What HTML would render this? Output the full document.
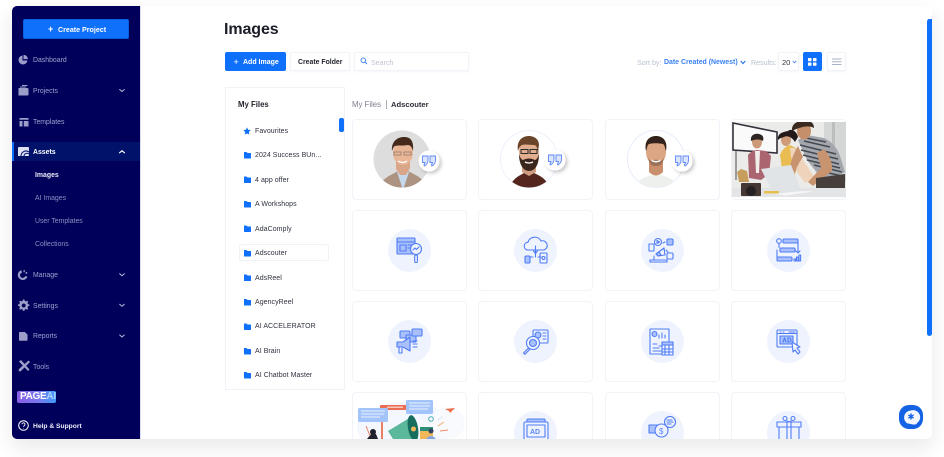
<!DOCTYPE html>
<html lang="en"><head><meta charset="utf-8"><title>Images</title>
<style>
*{box-sizing:border-box;margin:0;padding:0}
html,body{width:944px;height:457px;background:#fff;overflow:hidden;font-family:"Liberation Sans",sans-serif}
#win{position:absolute;left:12px;top:6px;width:920px;height:433px;background:#fff;box-shadow:0 8px 20px rgba(30,30,50,.1);border-radius:0 0 6px 6px;}
#clip{position:absolute;left:0;top:0;width:944px;height:439px;overflow:hidden}
.abs,.t,.card,.circ,svg.a{position:absolute}
.t{white-space:nowrap;line-height:10px;font-size:7.4px;margin-top:1px}
#side{position:absolute;left:12px;top:6px;width:128px;height:433px;background:#00005a;border-radius:5px 0 0 5px}
#sb{position:absolute;left:140px;top:6px;width:1px;height:433px;background:#dcdcf3}
.n{color:#a0a0cf;font-size:6.9px;margin-top:1.500px}
.s{color:#8d8dc2;font-size:6.9px;margin-top:1.500px}
.f{color:#2f3240;font-size:7px;left:255px;letter-spacing:.05px}
.card{width:115px;height:81px;background:#fff;border:1px solid #f1f3f9;border-radius:4px}
.circ{width:43px;height:43px;border-radius:50%;background:#eff3fd}
.ic{fill:none;stroke:#4f7cf6;stroke-width:1.100;stroke-linejoin:round;stroke-linecap:round}
.ic .m{fill:#a9c0fb}
.btn{position:absolute;border-radius:2px;background:#fff;border:1px solid #f1f3f9;box-shadow:0 1px 2px rgba(40,50,90,.05)}
</style></head><body>
<div id="win"></div>
<div id="clip">
<div id="side"></div><div id="sb"></div>

<div class="abs" style="left:23px;top:19px;width:106px;height:20px;background:#0f70fb;border-radius:2px;border:1px solid #0a5fe0"></div>
<div class="t" style="left:48px;top:24px;color:#fff;font-weight:700;font-size:9px;margin-top:0">+</div>
<div class="t" style="left:58px;top:24px;color:#fff;font-weight:700;font-size:7.100px">Create Project</div>

<svg class="a" style="left:12px;top:50px" width="128" height="330" viewBox="0 0 128 330" fill="#9d9dca">
<path d="M10.500 5.500a4.500 4.500 0 1 0 5 5h-5z"/><path d="M11.500 4.800a4.300 4.300 0 0 1 4.300 4.300h-4.300z"/>
<path d="M6.500 38h9a1 1 0 0 1 1 1v5.500a1 1 0 0 1-1 1h-9z"/><path d="M8 36.500h6v1H8zM10 35h5.500v1H10z"/>
<path d="M7.500 68h9v1.800h-9zM7.500 71h3v5.500h-3zM11.800 71h4.700v5.500h-4.700z"/>
<path d="M9.300 220.200a5 5 0 1 0 6.200 6.500l-2.400-.6a2.600 2.600 0 1 1-3-3.400z"/><path d="M11.500 220a5 5 0 0 1 1.800.6l-1 1.800-.8-.3zM14.500 221.600a5 5 0 0 1 1.100 1.700l-1.900.6-.5-.8z"/>
<path d="M11 249.500h1.400l.4 1.400 1.100.5 1.300-.7 1 1-.7 1.300.5 1.100 1.400.4v1.400l-1.400.4-.5 1.100.7 1.300-1 1-1.300-.7-1.100.5-.4 1.400H11l-.4-1.400-1.100-.5-1.300.7-1-1 .7-1.300-.5-1.100-1.400-.4v-1.400l1.400-.4.5-1.100-.7-1.300 1-1 1.300.7 1.100-.5zM11.700 253.500a2 2 0 1 0 .01 0z" fill-rule="evenodd"/>
<path d="M7.800 282h5l2.700 2.500v5.500a.8.8 0 0 1-.8.800H7.800a.8.8 0 0 1-.8-.8v-7.200a.8.8 0 0 1 .8-.8z"/>
<path d="M7 311.500l2-1.500 8.500 9.500-1.500 1.500zM16.500 310.500l1.500 1.500-9.500 9.500-2-.5.500-2z"/>
<g fill="none" stroke="#b9b9dc" stroke-width="1" stroke-linecap="round" stroke-linejoin="round">
<path d="M107.700 39.500l2.300 2 2.300-2M107.700 223.700l2.300 2 2.300-2M107.700 254.300l2.300 2 2.300-2M107.700 285l2.300 2 2.300-2"/></g>
</svg>

<div class="abs" style="left:12px;top:142px;width:128px;height:19px;background:#01126b"></div>
<div class="abs" style="left:12px;top:142px;width:1.500px;height:19px;background:#0f70fb"></div>
<svg class="a" style="left:18px;top:147px" width="11" height="9" viewBox="0 0 11 9"><path d="M1 0h9a1 1 0 0 1 1 1v7a1 1 0 0 1-1 1H0V1a1 1 0 0 1 1-1z" fill="#dfe2f3"/><path d="M3 9a5 5 0 0 1 8-4M6 9a3 3 0 0 1 5-2" stroke="#01126b" fill="none"/></svg>
<svg class="a" style="left:118px;top:149px" width="8" height="6" viewBox="0 0 8 6"><path d="M1.500 3.800l2.500-2 2.500 2" fill="none" stroke="#fff" stroke-width="1.200" stroke-linecap="round"/></svg>

<div class="t n" style="left:33px;top:54.500px">Dashboard</div>
<div class="t n" style="left:33px;top:85.500px">Projects</div>
<div class="t n" style="left:33px;top:116.500px">Templates</div>
<div class="t n" style="left:33px;top:146.500px;color:#fff;font-weight:700">Assets</div>
<div class="t s" style="left:35px;top:169.500px;color:#eaeaf8;font-weight:700">Images</div>
<div class="t s" style="left:35px;top:192.500px">AI Images</div>
<div class="t s" style="left:35px;top:215.500px">User Templates</div>
<div class="t s" style="left:35px;top:238.500px">Collections</div>
<div class="t n" style="left:33px;top:269.500px">Manage</div>
<div class="t n" style="left:33px;top:300px">Settings</div>
<div class="t n" style="left:33px;top:330.500px">Reports</div>
<div class="t n" style="left:33px;top:361.500px">Tools</div>

<div class="t" style="left:17px;top:391px;margin-top:0;width:39px;height:12px;line-height:12px;border-radius:2px;background:linear-gradient(90deg,#8a5fe6,#7a78ee 55%,#3f9bf8);color:#fff;font-weight:700;font-size:10px;padding-left:3px;letter-spacing:-.3px">PAGE<span style="color:#a8d2fc">AI</span></div>
<svg class="a" style="left:18px;top:420px" width="11" height="11" viewBox="0 0 11 11"><circle cx="5.500" cy="5.500" r="4.800" fill="none" stroke="#fff"/><path d="M4 4.300a1.500 1.500 0 1 1 2.300 1.300c-.6.400-.8.600-.8 1.200M5.500 8.300v.3" fill="none" stroke="#fff" stroke-width=".9"/></svg>
<div class="t" style="left:33px;top:420.500px;color:#eeeef9;font-weight:700;font-size:6.700px">Help &amp; Support</div>

<div class="t" style="left:224px;top:19px;font-size:16px;line-height:19px;color:#1b1d28;font-weight:700;letter-spacing:-.1px">Images</div>

<div class="abs" style="left:225px;top:52px;width:61px;height:19px;background:#0f70fb;border-radius:2px"></div>
<div class="t" style="left:233.500px;top:56.500px;margin-top:0;color:#fff;font-weight:400;font-size:9px">+</div>
<div class="t" style="left:243px;top:56.500px;color:#fff;font-weight:700;font-size:7px">Add Image</div>
<div class="btn" style="left:290px;top:52px;width:60px;height:19px"></div>
<div class="t" style="left:298px;top:56.500px;color:#23252f;font-weight:700;font-size:6.900px">Create Folder</div>
<div class="btn" style="left:354px;top:52px;width:115px;height:19px"></div>
<svg class="a" style="left:360px;top:57px" width="8" height="8" viewBox="0 0 8 8"><circle cx="3.300" cy="3.300" r="2.300" fill="none" stroke="#4d8af5" stroke-width="1"/><path d="M5 5l2 2" stroke="#4d8af5" stroke-width="1.100"/></svg>
<div class="t" style="left:371px;top:56.500px;color:#c0c5d6;font-size:7.100px">Search</div>

<div class="t" style="left:637px;top:56.500px;color:#bac0d0;font-size:7.100px">Sort by:</div>
<div class="t" style="left:664px;top:56.500px;color:#3b82f2;font-weight:700;font-size:6.950px">Date Created (Newest)</div>
<svg class="a" style="left:740px;top:60px" width="6" height="5" viewBox="0 0 6 5"><path d="M.7 1l2.300 2.500L5.300 1" fill="none" stroke="#2a75f0" stroke-width="1.200"/></svg>
<div class="t" style="left:751px;top:56.500px;color:#bac0d0;font-size:7.100px">Results:</div>
<div class="btn" style="left:778px;top:52px;width:21px;height:19px"></div>
<div class="t" style="left:782px;top:56.500px;color:#34363f;font-size:7.500px">20</div>
<svg class="a" style="left:792px;top:60px" width="5" height="4" viewBox="0 0 5 4"><path d="M.7 1l1.800 1.700L4.300 1" fill="none" stroke="#5a8ef0" stroke-width=".9"/></svg>
<div class="abs" style="left:803px;top:52px;width:19px;height:19px;background:#0f70fb;border-radius:2px"></div>
<svg class="a" style="left:808px;top:58px" width="9" height="8" viewBox="0 0 9 8" fill="#fff"><rect width="3.500" height="3.300" rx=".5"/><rect x="5" width="3.500" height="3.300" rx=".5"/><rect y="4.500" width="3.500" height="3.300" rx=".5"/><rect x="5" y="4.500" width="3.500" height="3.300" rx=".5"/></svg>
<div class="btn" style="left:827px;top:52px;width:19px;height:19px"></div>
<svg class="a" style="left:831px;top:58px" width="11" height="8" viewBox="0 0 11 8" stroke="#aab2c8"><path d="M1 1h9.500M1 3.700h9.500M1 6.500h9.500"/></svg>

<div class="abs" style="left:225px;top:87px;width:120px;height:303px;background:#fff;border:1px solid #f0f2f8"></div>
<div class="t" style="left:238px;top:99px;font-weight:700;color:#23252f;font-size:7.800px">My Files</div>
<div class="abs" style="left:339px;top:118px;width:4.500px;height:14px;background:#0f70fb;border-radius:2px"></div>
<div class="abs" style="left:239px;top:244px;width:90px;height:17px;background:#fff;border:1px solid #f0f2f8;border-radius:2px"></div>
<svg class="a" style="left:243px;top:127px" width="8" height="8" viewBox="0 0 10 10"><path d="M5 .500l1.400 3 3.300.4-2.400 2.200.6 3.300L5 8.200 2.100 9.400l.6-3.300L.3 3.900l3.300-.4z" fill="#0f70fb"/></svg>
<div class="t f" style="top:126px">Favourites</div>

<svg class="a" style="left:244px;top:152px" width="7" height="230" viewBox="0 0 7 230" fill="#0f70fb">
<path d="M0 .500a.5.500 0 0 1 .5-.5H2.500l1 1h3a.5.500 0 0 1 .5.500V6a.5.500 0 0 1-.5.500H.5A.5.500 0 0 1 0 6z"/>
<path transform="translate(0 24.500)" d="M0 .500a.5.500 0 0 1 .5-.5H2.500l1 1h3a.5.500 0 0 1 .5.500V6a.5.500 0 0 1-.5.500H.5A.5.500 0 0 1 0 6z"/>
<path transform="translate(0 49)" d="M0 .500a.5.500 0 0 1 .5-.5H2.500l1 1h3a.5.500 0 0 1 .5.500V6a.5.500 0 0 1-.5.500H.5A.5.500 0 0 1 0 6z"/>
<path transform="translate(0 73.500)" d="M0 .500a.5.500 0 0 1 .5-.5H2.500l1 1h3a.5.500 0 0 1 .5.500V6a.5.500 0 0 1-.5.500H.5A.5.500 0 0 1 0 6z"/>
<path transform="translate(0 98)" d="M0 .500a.5.500 0 0 1 .5-.5H2.500l1 1h3a.5.500 0 0 1 .5.500V6a.5.500 0 0 1-.5.500H.5A.5.500 0 0 1 0 6z"/>
<path transform="translate(0 122.500)" d="M0 .500a.5.500 0 0 1 .5-.5H2.500l1 1h3a.5.500 0 0 1 .5.500V6a.5.500 0 0 1-.5.500H.5A.5.500 0 0 1 0 6z"/>
<path transform="translate(0 147)" d="M0 .500a.5.500 0 0 1 .5-.5H2.500l1 1h3a.5.500 0 0 1 .5.500V6a.5.500 0 0 1-.5.500H.5A.5.500 0 0 1 0 6z"/>
<path transform="translate(0 171.500)" d="M0 .500a.5.500 0 0 1 .5-.5H2.500l1 1h3a.5.500 0 0 1 .5.500V6a.5.500 0 0 1-.5.500H.5A.5.500 0 0 1 0 6z"/>
<path transform="translate(0 196)" d="M0 .500a.5.500 0 0 1 .5-.5H2.500l1 1h3a.5.500 0 0 1 .5.500V6a.5.500 0 0 1-.5.500H.5A.5.500 0 0 1 0 6z"/>
<path transform="translate(0 220)" d="M0 .500a.5.500 0 0 1 .5-.5H2.500l1 1h3a.5.500 0 0 1 .5.500V6a.5.500 0 0 1-.5.500H.5A.5.500 0 0 1 0 6z"/>
</svg>
<div class="t f" style="top:150px">2024 Success BUn...</div>
<div class="t f" style="top:175px">4 app offer</div>
<div class="t f" style="top:199px">A Workshops</div>
<div class="t f" style="top:224px">AdaComply</div>
<div class="t f" style="top:248px">Adscouter</div>
<div class="t f" style="top:273px">AdsReel</div>
<div class="t f" style="top:297px">AgencyReel</div>
<div class="t f" style="top:321px">AI ACCELERATOR</div>
<div class="t f" style="top:346px">AI Brain</div>
<div class="t f" style="top:370px">AI Chatbot Master</div>

<div class="t" style="left:352px;top:99px;color:#7b7f8e;font-size:7.800px">My Files</div>
<div class="abs" style="left:385.500px;top:100px;width:1px;height:9px;background:#a9adbb"></div>
<div class="t" style="left:391px;top:99px;color:#2b2d38;font-weight:700;font-size:7.600px">Adscouter</div>

<div class="card" style="left:352px;top:119px"></div><div class="card" style="left:478px;top:119px"></div><div class="card" style="left:605px;top:119px"></div><div class="card" style="left:731px;top:119px"></div>
<div class="card" style="left:352px;top:210px"></div><div class="card" style="left:478px;top:210px"></div><div class="card" style="left:605px;top:210px"></div><div class="card" style="left:731px;top:210px"></div>
<div class="card" style="left:352px;top:301px"></div><div class="card" style="left:478px;top:301px"></div><div class="card" style="left:605px;top:301px"></div><div class="card" style="left:731px;top:301px"></div>
<div class="card" style="left:352px;top:392px"></div><div class="card" style="left:478px;top:392px"></div><div class="card" style="left:605px;top:392px"></div><div class="card" style="left:731px;top:392px"></div>

<svg class="a" style="left:370px;top:126px" width="80" height="66" viewBox="0 0 80 66">
<defs><clipPath id="c1"><circle cx="32" cy="33" r="28.500"/></clipPath>
<filter id="sh" x="-50%" y="-50%" width="200%" height="200%"><feDropShadow dx="2" dy="2" stdDeviation="1.800" flood-color="#000" flood-opacity=".22"/></filter></defs>
<g clip-path="url(#c1)"><rect width="64" height="66" fill="#dcdddc"/>
<path d="M8 64c3-12 12-14 20-19h10c7 4 17 7 20 19z" fill="#ad9381"/><path d="M27 46l6 18 6-18-5-3z" fill="#c6d8ec"/>
<path d="M26 32h14v10l-4 7h-6l-4-6z" fill="#d9a688"/><ellipse cx="33" cy="27" rx="10" ry="12" fill="#e8b597"/>
<path d="M22 25c-1-10 6-14 12-14s10 3 9 14c-1-4-3-6-5-6-6 1-11 0-13 1-2 1-2 3-3 5z" fill="#452a1c"/>
<path d="M24 26h7v3h-7zM34 26h7v3h-7z" fill="none" stroke="#8a7768" stroke-width=".7"/><path d="M28 35q5 3 9 0" fill="none" stroke="#fff" stroke-width="1.300"/></g>
<circle cx="59" cy="35" r="10.500" fill="#fff" filter="url(#sh)"/>
<g fill="#dbe5fe" stroke="#5f87f6" stroke-width=".9"><path d="M52.500 30h5.500v4q0 4-3.500 6l-.6-1q1-1.500 1-2.500h-2.400zM60 30h5.500v4q0 4-3.500 6l-.6-1q1-1.500 1-2.500H60z"/></g>
</svg>

<svg class="a" style="left:496px;top:126px" width="80" height="66" viewBox="0 0 80 66">
<defs><clipPath id="c2"><circle cx="33" cy="33" r="28.500"/></clipPath></defs>
<circle cx="33" cy="33" r="28.500" fill="#fff" stroke="#edf1fc"/>
<g clip-path="url(#c2)"><path d="M13 64c2-11 10-14 15-17h10c6 3 14 6 16 17z" fill="#54261e"/>
<path d="M26 32h14v14l-7 4-7-4z" fill="#cf9c80"/><ellipse cx="33" cy="26" rx="10" ry="13" fill="#e2ae90"/>
<path d="M23 28c0 10 4 17 10 17s10-6 10-17c-1 4-3 6-4 6-4-2-8-2-12 0-1 0-3-2-4-6z" fill="#3a261b"/>
<path d="M22 25c-2-12 6-15 11-15s10 3 10 9l-1 6c-1-4-2-6-4-6-5 0-9-1-12 0-2 1-3 3-4 6z" fill="#6a4529"/>
<path d="M25 23.500h7v4h-7zM34 23.500h7v4h-7z" fill="none" stroke="#2a2a2a" stroke-width="1"/><path d="M29 36q4 2 8 0" stroke="#fff" stroke-width="1.300" fill="none"/></g>
<circle cx="59" cy="34" r="10.500" fill="#fff" filter="url(#sh)"/>
<g fill="#dbe5fe" stroke="#5f87f6" stroke-width=".9"><path d="M52.500 29h5.500v4q0 4-3.500 6l-.6-1q1-1.500 1-2.500h-2.400zM60 29h5.500v4q0 4-3.500 6l-.6-1q1-1.500 1-2.500H60z"/></g>
</svg>

<svg class="a" style="left:623px;top:126px" width="80" height="66" viewBox="0 0 80 66">
<defs><clipPath id="c3"><circle cx="33" cy="33" r="28.500"/></clipPath></defs>
<circle cx="33" cy="33" r="28.500" fill="#fff" stroke="#e6ecfb"/>
<g clip-path="url(#c3)"><path d="M11 64c2-10 11-13 18-15h9c7 2 16 5 18 15z" fill="#eef0ee"/>
<path d="M26 32h14v14q-7 7-14 0z" fill="#c98f6c"/><ellipse cx="33" cy="26" rx="10" ry="13" fill="#dca583"/>
<path d="M23 25c-2-10 3-15 10-15s12 5 10 15c-1-2-1-6-3-7-5-1-10-1-14 0-2 1-2 5-3 7z" fill="#33231c"/>
<path d="M25 31c1 7 4 9 8 9s7-2 8-9c-1 3-2 4-4 3.500-3-1-5-1-8 0-2 .5-3-.5-4-3.500z" fill="#9a6f58"/><path d="M28 33.500q5 3 10 0l-1 2q-4 2-8 0z" fill="#fff"/></g>
<circle cx="59" cy="35" r="10.500" fill="#fff" filter="url(#sh)"/>
<g fill="#dbe5fe" stroke="#5f87f6" stroke-width=".9"><path d="M52.500 30h5.500v4q0 4-3.500 6l-.6-1q1-1.500 1-2.500h-2.400zM60 30h5.500v4q0 4-3.500 6l-.6-1q1-1.500 1-2.500H60z"/></g>
</svg>

<svg class="a" style="left:732px;top:122px" width="114" height="75" viewBox="0 0 114 75">
<rect width="114" height="75" fill="#ebecea"/><rect x="92" width="22" height="60" fill="#d4d7d6"/><rect x="100" width="3" height="55" fill="#bbbebd"/>
<path d="M1 1l44 9v21L1 28z" fill="#fafafa" stroke="#33303a" stroke-width="1.600"/><path d="M4 28v30" stroke="#4a4a4a"/>
<path d="M16 33q4-5 9-5l9 1 5 5-2 18-8 6-12-2z" fill="#aa6570"/><path d="M23 29l5 0-1 22h-3z" fill="#f1efec"/>
<ellipse cx="25" cy="20" rx="5" ry="6.500" fill="#cc9a78"/><path d="M19 19c-1-6 4-8 8-7s5 3 4 7c-3-2-8-2-12 0z" fill="#2d2623"/>
<path d="M48 33q3-8 10-10l6 3 2 12-3 15-12 1z" fill="#e9bd52"/><path d="M58 26l5 0 8 12 12 18-10 5-9-12-5-14z" fill="#efd4bb"/>
<ellipse cx="54" cy="18" rx="5" ry="6" fill="#cf9b79"/><path d="M46 18c-1-6 4-8 10-9 3-3 9 0 10 6l-3 5c-3-5-8-7-11-5-3 1-4 1-6 3z" fill="#241a1a"/>
<path d="M66 18l9-5 17 3q12 6 16 18l5 16-10 6-14 0-14-18z" fill="#a3a7ad"/>
<path d="M68 23l36 9M69 28l37 9M71 33l36 9M75 38l33 8M82 43l28 7M88 49l22 5M74 16l20 4M72 19l26 6" stroke="#444950" stroke-width="1.500"/>
<ellipse cx="72" cy="9" rx="7" ry="8.500" fill="#c58f6b"/><path d="M60 9c-1-8 7-11 14-10 6 0 8 3 8 7-4-2-8-2-13-.5-4 1-6 2-9 3.500z" fill="#3a2a20"/>
<path d="M66 24q-7 11-10 30l5 4q3-14 10-23zM92 27q9 10 8 22l-19 15-5-4 13-14-4-15z" fill="#c8946f"/>
<path d="M84 56l29-4v16H84z" fill="#473f3b"/>
<rect x="0" y="66" width="114" height="9" fill="#e3e4e5"/>
<path d="M29 47l30-4 11 27-28 3z" fill="#e1e4e6"/><path d="M42 72l28-3 12 .5-28 4z" fill="#f6f6f6"/>
<path d="M5 50l4-3 6 2 2 11H7z" fill="#c79d5e"/><rect x="9" y="61" width="20" height="13" rx="1" fill="#453733"/><circle cx="19" cy="69" r="5" fill="#252122"/>
<rect x="32" y="69" width="15" height="2.500" fill="#e8c04f"/>
</svg>

<div class="circ" style="left:388px;top:229px"></div><div class="circ" style="left:514px;top:229px"></div><div class="circ" style="left:641px;top:229px"></div><div class="circ" style="left:767px;top:229px"></div>
<div class="circ" style="left:388px;top:320px"></div><div class="circ" style="left:514px;top:320px"></div><div class="circ" style="left:641px;top:320px"></div><div class="circ" style="left:767px;top:320px"></div>
<div class="circ" style="left:514px;top:411px"></div><div class="circ" style="left:641px;top:411px"></div><div class="circ" style="left:767px;top:411px"></div>

<svg class="a ic" style="left:395px;top:236px" width="30" height="30" viewBox="0 0 30 30"><rect class="m" x="2" y="2" width="18" height="16" rx="1"/><path d="M2 6h18M5 9h6v6H5zM13 9h3M13 12h2"/><circle cx="21" cy="13" r="5.500" fill="#eff3fd"/><path d="M18 14l2-2 1.500 1.500L24 11"/><rect x="19.700" y="19" width="2.700" height="7.500" rx="1.300"/></svg>
<svg class="a ic" style="left:521px;top:236px" width="30" height="30" viewBox="0 0 30 30"><path d="M6 14a4 4 0 0 1 1-7.800A7 7 0 0 1 20 5a4.500 4.500 0 0 1 3 9H6z"/><path d="M14.500 10v7M12.500 15l2 2.500 2-2.500M14.500 17v4M7 21h5M17 21h3"/><rect class="m" x="4" y="20" width="5" height="7" rx="1"/><rect x="19" y="17" width="7" height="10" rx="1"/><circle cx="22.500" cy="22" r="1.500"/></svg>
<svg class="a ic" style="left:647px;top:236px" width="30" height="30" viewBox="0 0 30 30"><circle cx="11" cy="6" r="3.500"/><path d="M10 4.500v3l2.500-1.500z"/><rect class="m" x="20" y="3" width="6" height="6" rx="1"/><rect x="2" y="8" width="5" height="7"/><rect x="20" y="17" width="6" height="6" rx="1"/><path d="M6 24h14v2H3v-2zM7 24V20M9 18l8-6 1 7-7 1z"/><path class="m" d="M9 18l3-2 2 3-3 1z"/><path d="M16 7l2-1M19 14l2 2"/></svg>
<svg class="a ic" style="left:774px;top:236px" width="30" height="30" viewBox="0 0 30 30"><circle cx="5" cy="5" r="2.300"/><path d="M5 7.500l0 4"/><rect class="m" x="9" y="3" width="15" height="4" rx="1"/><rect class="m" x="6" y="12" width="15" height="4" rx="1"/><rect class="m" x="3" y="21" width="15" height="4" rx="1"/><path d="M24 7v10M22 15l2 2 2-2M3 14v7"/><rect x="20" y="23" width="1.600" height="2"/><rect x="22.500" y="21" width="1.600" height="4"/><rect x="25" y="19" width="1.600" height="6"/></svg>

<svg class="a ic" style="left:395px;top:327px" width="30" height="30" viewBox="0 0 30 30"><rect class="m" x="5" y="4" width="10" height="7" rx="1"/><rect class="m" x="11" y="8" width="10" height="7" rx="1"/><rect class="m" x="17" y="2" width="10" height="7" rx="1"/><path class="m" d="M2 15h6l7-5v14l-7-4H2z"/><path d="M4 20v6h3v-5M18 14h4M18 17h4M18 20h4"/></svg>
<svg class="a ic" style="left:521px;top:327px" width="30" height="30" viewBox="0 0 30 30"><rect x="12" y="3" width="15" height="13" rx="1"/><circle class="m" cx="17" cy="8" r="3"/><path d="M22 6h3M22 9h3M22 12h3"/><circle cx="12" cy="16" r="6.500" fill="#eff3fd"/><circle class="m" cx="12" cy="16" r="3.500"/><path d="M7.500 21l-5 5 1.300 1.300 5-5z"/></svg>
<svg class="a ic" style="left:647px;top:327px" width="30" height="30" viewBox="0 0 30 30"><rect x="3" y="2" width="19" height="25"/><circle class="m" cx="7.500" cy="7" r="2.500"/><path d="M12 11V8M15 11V6M18 11V8M6 17h4M12 19h8M6 21h6M6 24h8"/><rect x="15" y="15" width="11" height="13" fill="#eff3fd"/><path d="M15 18h11M18 18v10M22 18v10M15 22h11M15 25h11"/><rect class="m" x="15" y="15" width="11" height="3"/></svg>
<svg class="a ic" style="left:774px;top:327px" width="30" height="30" viewBox="0 0 30 30"><rect x="3" y="3" width="20" height="17" rx="1"/><path d="M3 6.500h20M6 5h1M9 5h1M15 5h6"/><rect class="m" x="6" y="9" width="13" height="8"/><path d="M18 15l8 5-3 1 3 4-2 2-3-4-2 2z" fill="#eff3fd"/><path d="M9 15l1.500-4 1.500 4M14 11v4h1a2 2 0 0 0 0-4z"/></svg>

<svg class="a" style="left:353px;top:393px" width="113" height="46" viewBox="0 0 113 46">
<ellipse cx="52" cy="35" rx="48" ry="26" fill="#f4f7fd"/><ellipse cx="95" cy="30" rx="17" ry="16" fill="#f9fafd"/>
<rect x="28" y="17" width="2" height="29" fill="#ea7f61"/><rect x="27" y="12" width="27" height="5" rx="1" fill="#ea6f52"/><rect x="34" y="13.500" width="16" height="1.500" fill="#f9c7b8"/>
<rect x="5" y="15" width="30" height="14" rx="1.500" fill="#a3c4fb"/><path d="M8 18h24M8 21h23M8 24h19" stroke="#e9f1ff" stroke-width=".9"/>
<rect x="53" y="7" width="27" height="14" rx="1.500" fill="#a3c4fb"/><path d="M56 10h21M56 13h21M56 16h19" stroke="#e9f1ff" stroke-width=".9"/>
<path d="M35 38l23-14 7 22H40z" fill="#5cb89a"/><ellipse cx="60" cy="35" rx="5" ry="13" transform="rotate(-10 60 35)" fill="#176e5e"/>
<circle cx="60.500" cy="36" r="2.500" fill="#f1b75b"/><rect x="67" y="35" width="13" height="11" fill="#f1b75b"/><rect x="67" y="34" width="13" height="4" fill="#2d8e78"/>
<circle cx="78" cy="38" r="2.500" fill="#33435d"/><path d="M73 46q5-6 10 0z" fill="#7ea6e6"/>
<circle cx="20" cy="39" r="3" fill="#1e1f2b"/><path d="M14 46l4-5h5l2 5z" fill="#20222e"/><path d="M13 33l4 10" stroke="#ea7f61"/>
<path d="M92 16l10-1-5 5-1-2z" fill="#ee6b4c"/><circle cx="78" cy="26" r="2.300" fill="none" stroke="#4bb1b7"/><path d="M85 33l6-4" stroke="#f3bd8e" stroke-width="1.200"/><path d="M87 38l8-1" stroke="#ee8a6c" stroke-width="1"/><path d="M85 27l5-4" stroke="#ccd3e0" stroke-dasharray="1 1"/>
</svg>

<svg class="a ic" style="left:521px;top:418px" width="30" height="30" viewBox="0 0 30 30"><rect class="m" x="6" y="1" width="18" height="5" rx="1"/><rect x="3" y="4" width="24" height="18" rx="1.500" fill="#eff3fd"/><rect x="6" y="7" width="18" height="12"/><text x="9" y="16" font-size="7" font-weight="700" fill="#5a84f6" stroke="none" font-family="Liberation Sans, sans-serif">AD</text></svg>
<svg class="a ic" style="left:647px;top:416px" width="32" height="30" viewBox="0 0 32 30"><circle cx="23" cy="6" r="5.500" fill="#eff3fd"/><path d="M20 6h6M20 4h5M20 8h4"/><rect class="m" x="2" y="9" width="12" height="8"/><rect x="8" y="8" width="13" height="13" rx="6.500" fill="#eff3fd"/><text x="12" y="18" font-size="8" fill="#5a84f6" stroke="none" font-family="Liberation Sans, sans-serif">$</text></svg>
<svg class="a ic" style="left:774px;top:415px" width="30" height="30" viewBox="0 0 30 30"><path d="M3 7h24v5H3zM5 12h20v14H5zM13 7h4v19h-4z"/><circle cx="11" cy="3.500" r="2"/><circle cx="19" cy="3.500" r="2"/><path d="M13 6l2 1 2-1"/></svg>

<div class="abs" style="left:927px;top:19px;width:5px;height:317px;background:#0f70fb;border-radius:2.500px 0 2.500px 2.500px"></div>
<svg class="a" style="left:898px;top:404px" width="26" height="26" viewBox="0 0 26 26"><rect x="1" y="1" width="24" height="24" rx="10" fill="#1463e4"/><path d="M13 6.500a7 7 0 0 0-4 12.700l6 1.300q4 .3 4-1.500A7 7 0 0 0 13 6.500z" fill="#f4f7ff"/><path d="M13 10v5M10.800 11.200l4.400 2.600M15.200 11.200l-4.400 2.600" stroke="#1463e4" stroke-width="1.400" stroke-linecap="round"/></svg>
</div>
</body></html>
